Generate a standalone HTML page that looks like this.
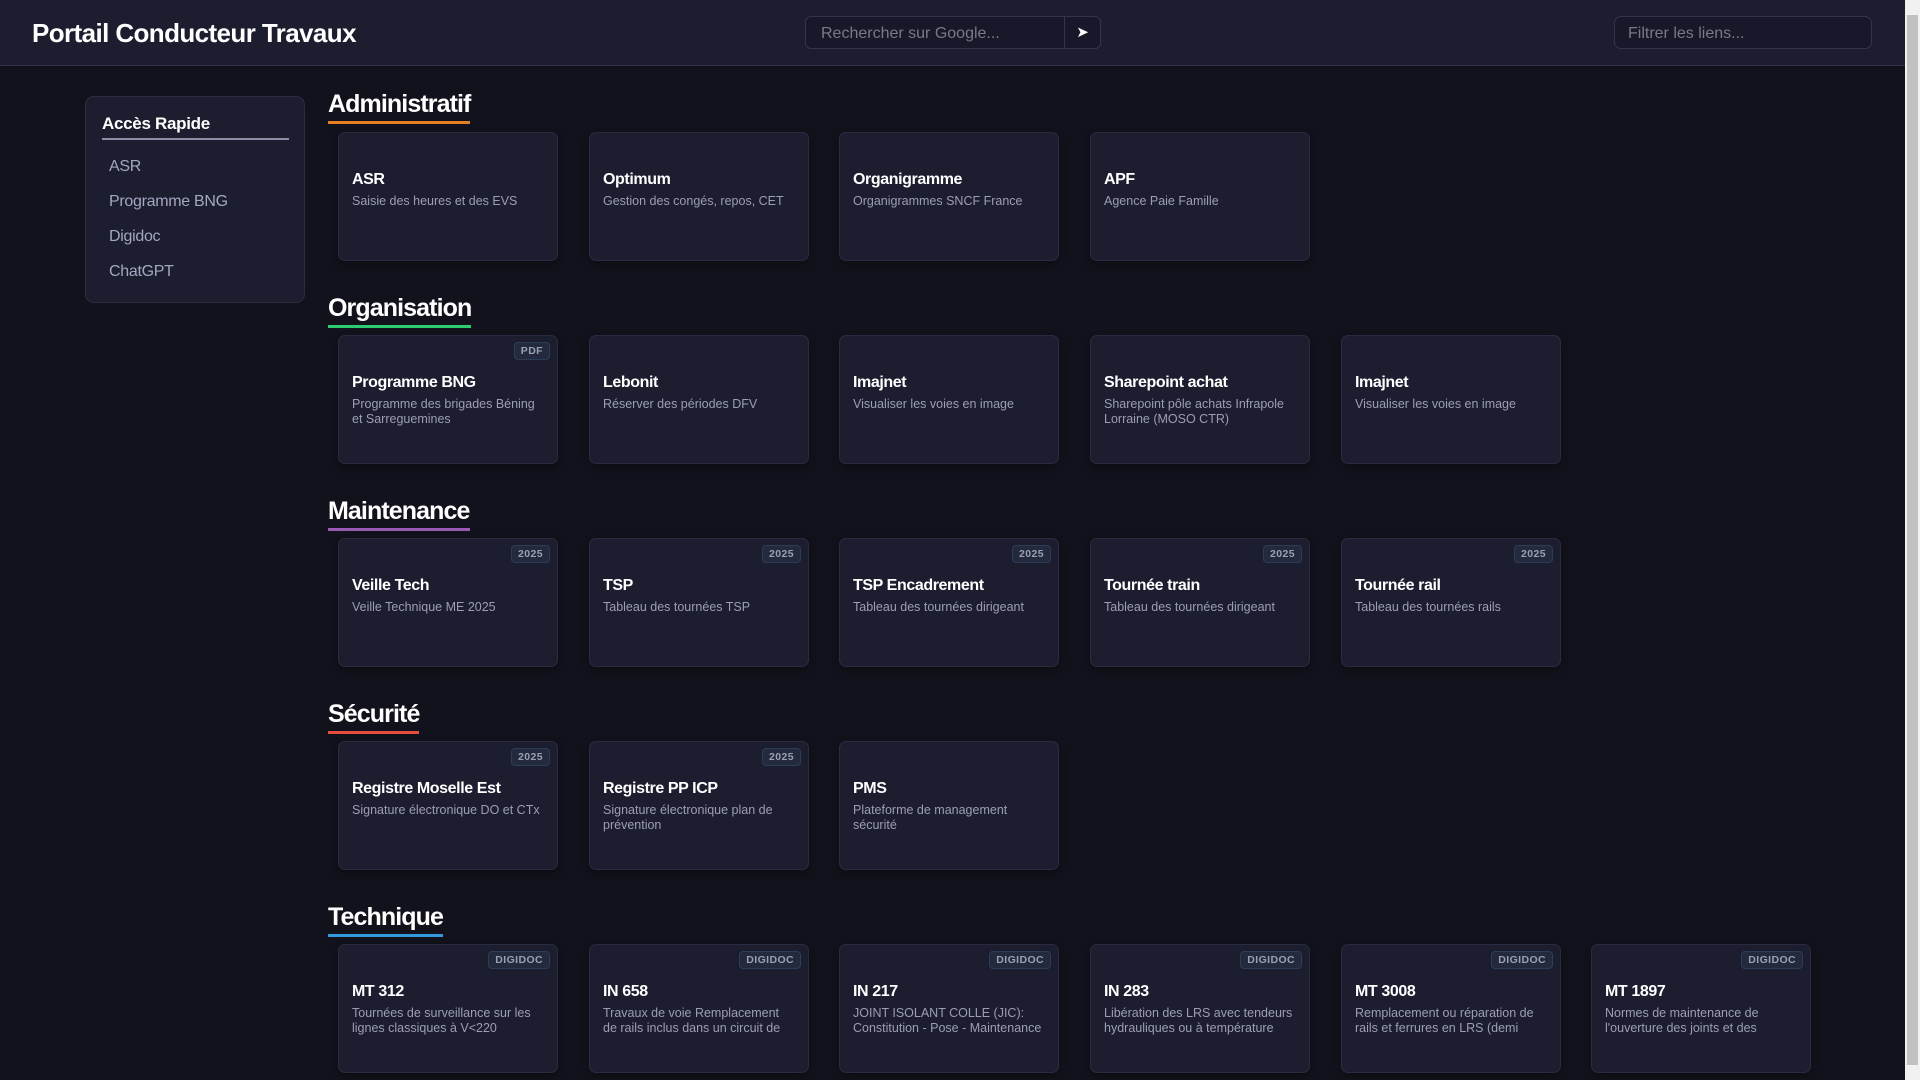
<!DOCTYPE html>
<html><head><meta charset="utf-8">
<style>
*{box-sizing:border-box;margin:0;padding:0}
html,body{width:1920px;height:1080px;overflow:hidden;background:#12121c;font-family:"Liberation Sans",sans-serif;color:#fff}
.hdr{position:absolute;left:0;top:0;width:1905px;height:66px;background:#1c1d2f;border-bottom:1px solid #33344a}
.hdr h1{position:absolute;left:32px;top:18px;font-size:26px;font-weight:bold;letter-spacing:-0.6px}
.search{position:absolute;left:805px;top:16px;width:296px;height:33px;border:1px solid #34354a;border-radius:6px;background:#171829;overflow:hidden}
.search span{position:absolute;left:15px;top:8px;font-size:16px;color:#7a7a85}
.search .btn{position:absolute;right:0;top:0;width:36px;height:33px;border-left:1px solid #34354a;color:#fff;font-size:15px;text-align:center;line-height:31px}
.filter{position:absolute;left:1614px;top:16px;width:258px;height:33px;border:1px solid #34354a;border-radius:7px;background:#171829}
.filter span{position:absolute;left:13px;top:8px;font-size:16px;color:#7a7a85}
.sb{position:absolute;right:0;top:0;width:15px;height:1080px;background:#f1f1f1}
.sb .th{position:absolute;left:2px;top:15px;width:11px;height:1050px;background:#c1c1c1}
.side{position:absolute;left:85px;top:96px;width:220px;height:207px;background:#1c1d2f;border:1px solid #2c2d42;border-radius:9px}
.side h3{position:absolute;left:16px;top:17px;font-size:17px;font-weight:bold;letter-spacing:-0.3px}
.side .ul{position:absolute;left:16px;top:41px;width:187px;height:2px;background:#8b8ba8}
.side a{position:absolute;left:23px;font-size:16px;color:#a5a6c0;text-decoration:none;letter-spacing:-0.3px}
.h2{position:absolute;left:328px;font-size:25px;font-weight:bold;padding-bottom:2px;border-bottom:3px solid;letter-spacing:-0.9px}
.card{position:absolute;width:220px;height:129px;background:#1c1d2f;border:1px solid #2a2b40;border-radius:7px;box-shadow:0 3px 8px rgba(0,0,0,.35)}
.card b{position:absolute;left:13px;top:38px;font-size:16px;font-weight:bold;color:#fff;letter-spacing:-0.4px}
.card p{position:absolute;left:13px;top:61px;right:12px;font-size:12.5px;line-height:15px;color:#9d9eb5}
.badge{position:absolute;right:7px;top:6px;height:18px;padding:0 6px;border:1px solid #2c3d58;background:#232a3e;border-radius:4px;font-size:10.5px;font-weight:bold;color:#9a9fb5;line-height:16px;letter-spacing:.4px}
</style></head><body>
<div class="hdr"><h1>Portail Conducteur Travaux</h1>
<div class="search"><span>Rechercher sur Google...</span><div class="btn">➤</div></div>
<div class="filter"><span>Filtrer les liens...</span></div></div>
<div class="sb"><div class="th"></div></div>
<div class="side"><h3>Accès Rapide</h3><div class="ul"></div>
<a style="top:61px">ASR</a><a style="top:96px">Programme BNG</a><a style="top:131px">Digidoc</a><a style="top:166px">ChatGPT</a></div>

<div class="h2" style="top:90px;border-color:#e67e22">Administratif</div>
<div class="h2" style="top:294px;border-color:#2ecc71">Organisation</div>
<div class="h2" style="top:497px;border-color:#9b59b6">Maintenance</div>
<div class="h2" style="top:700px;border-color:#e74c3c">Sécurité</div>
<div class="h2" style="top:903px;border-color:#3498db">Technique</div>

<div class="card" style="left:338px;top:132px"><b>ASR</b><p>Saisie des heures et des EVS</p></div>
<div class="card" style="left:589px;top:132px"><b>Optimum</b><p>Gestion des congés, repos, CET</p></div>
<div class="card" style="left:839px;top:132px"><b>Organigramme</b><p>Organigrammes SNCF France</p></div>
<div class="card" style="left:1090px;top:132px"><b>APF</b><p>Agence Paie Famille</p></div>

<div class="card" style="left:338px;top:335px"><span class="badge">PDF</span><b>Programme BNG</b><p>Programme des brigades Béning et Sarreguemines</p></div>
<div class="card" style="left:589px;top:335px"><b>Lebonit</b><p>Réserver des périodes DFV</p></div>
<div class="card" style="left:839px;top:335px"><b>Imajnet</b><p>Visualiser les voies en image</p></div>
<div class="card" style="left:1090px;top:335px"><b>Sharepoint achat</b><p>Sharepoint pôle achats Infrapole Lorraine (MOSO CTR)</p></div>
<div class="card" style="left:1341px;top:335px"><b>Imajnet</b><p>Visualiser les voies en image</p></div>

<div class="card" style="left:338px;top:538px"><span class="badge">2025</span><b>Veille Tech</b><p>Veille Technique ME 2025</p></div>
<div class="card" style="left:589px;top:538px"><span class="badge">2025</span><b>TSP</b><p>Tableau des tournées TSP</p></div>
<div class="card" style="left:839px;top:538px"><span class="badge">2025</span><b>TSP Encadrement</b><p>Tableau des tournées dirigeant</p></div>
<div class="card" style="left:1090px;top:538px"><span class="badge">2025</span><b>Tournée train</b><p>Tableau des tournées dirigeant</p></div>
<div class="card" style="left:1341px;top:538px"><span class="badge">2025</span><b>Tournée rail</b><p>Tableau des tournées rails</p></div>

<div class="card" style="left:338px;top:741px"><span class="badge">2025</span><b>Registre Moselle Est</b><p>Signature électronique DO et CTx</p></div>
<div class="card" style="left:589px;top:741px"><span class="badge">2025</span><b>Registre PP ICP</b><p>Signature électronique plan de prévention</p></div>
<div class="card" style="left:839px;top:741px"><b>PMS</b><p>Plateforme de management sécurité</p></div>

<div class="card" style="left:338px;top:944px"><span class="badge">DIGIDOC</span><b>MT 312</b><p>Tournées de surveillance sur les lignes classiques à V&lt;220</p></div>
<div class="card" style="left:589px;top:944px"><span class="badge">DIGIDOC</span><b>IN 658</b><p>Travaux de voie Remplacement de rails inclus dans un circuit de</p></div>
<div class="card" style="left:839px;top:944px"><span class="badge">DIGIDOC</span><b>IN 217</b><p>JOINT ISOLANT COLLE (JIC): Constitution - Pose - Maintenance</p></div>
<div class="card" style="left:1090px;top:944px"><span class="badge">DIGIDOC</span><b>IN 283</b><p>Libération des LRS avec tendeurs hydrauliques ou à température</p></div>
<div class="card" style="left:1341px;top:944px"><span class="badge">DIGIDOC</span><b>MT 3008</b><p>Remplacement ou réparation de rails et ferrures en LRS (demi</p></div>
<div class="card" style="left:1591px;top:944px"><span class="badge">DIGIDOC</span><b>MT 1897</b><p>Normes de maintenance de l'ouverture des joints et des</p></div>
</body></html>
